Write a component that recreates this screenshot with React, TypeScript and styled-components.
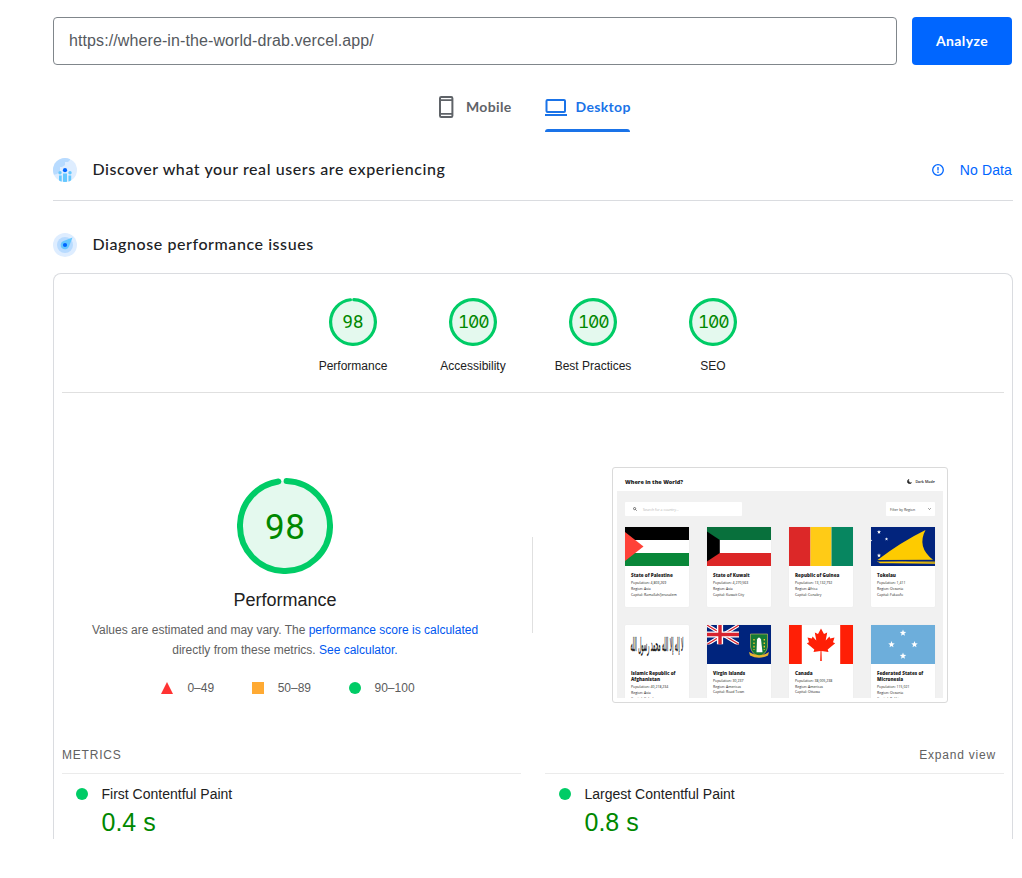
import React from "react";
import styled, { createGlobalStyle, css } from "styled-components";

const GlobalStyle = createGlobalStyle`
  *, *::before, *::after { box-sizing: border-box; }
  html, body { margin: 0; background: #fff; }
  body { font-family: "Liberation Sans", Arial, sans-serif; color: #212121; }
  svg { display: block; flex: none; }
`;

const heading = css`
  font-family: Lato, "Open Sans", sans-serif;
`;

const Page = styled.main`
  width: 1022px;
  height: 878px;
  padding: 17px 9px 0 53px;
  overflow: hidden;
`;

const SearchRow = styled.div`
  display: flex;
  gap: 15px;
  height: 48px;
  margin-right: 1px;
`;

const UrlField = styled.div`
  flex: 1;
  display: flex;
  align-items: center;
  padding: 0 15px 1px;
  border: 1px solid #80868b;
  border-radius: 4px;
  color: #55595e;
  font-size: 16px;
  letter-spacing: 0.1px;
`;

const AnalyzeButton = styled.button`
  ${heading}
  width: 100px;
  padding: 0 0 2px;
  border: 0;
  border-radius: 4px;
  background: #06f;
  color: #fff;
  font-size: 14px;
  font-weight: 700;
  letter-spacing: 0.4px;
`;

const Tabs = styled.nav`
  display: flex;
  height: 50px;
  margin-top: 17px;
  padding-left: 385px;
  gap: 34px;
`;

const Tab = styled.div<{ $active?: boolean; $width: number }>`
  ${heading}
  position: relative;
  display: flex;
  align-items: center;
  width: ${(p) => p.$width}px;
  gap: ${(p) => (p.$active ? 8.5 : 12)}px;
  color: ${(p) => (p.$active ? "#1a73e8" : "#5f6368")};
  font-size: 14px;
  font-weight: 700;
  letter-spacing: 0.35px;
  white-space: nowrap;
  &::after {
    content: "";
    position: absolute;
    left: 0;
    right: 0;
    bottom: 0;
    height: 3px;
    border-radius: 3px 3px 0 0;
    background: ${(p) => (p.$active ? "#1a73e8" : "transparent")};
  }
`;

const TabLabel = styled.span`
  padding-bottom: 2px;
`;

const Section = styled.header<{ $ruled?: boolean }>`
  display: flex;
  align-items: center;
  height: ${(p) => (p.$ruled ? 61 : 56)}px;
  margin-top: ${(p) => (p.$ruled ? 8 : 16)}px;
  border-bottom: ${(p) => (p.$ruled ? "1px solid #dadce0" : "0")};
`;

const SectionTitle = styled.h2`
  ${heading}
  flex: 1;
  margin: 0 0 0 15.5px;
  padding-bottom: 3px;
  color: #202124;
  font-size: 16px;
  font-weight: 500;
  letter-spacing: 0.57px;
`;

const NoData = styled.span`
  display: flex;
  align-items: center;
  gap: 16px;
  margin-right: 1px;
  color: #06f;
  font-size: 14px;
  letter-spacing: 0.12px;
`;

const Report = styled.section`
  height: 566px;
  padding: 0 8px;
  border: 1px solid #dadce0;
  border-bottom: 0;
  border-radius: 8px 8px 0 0;
`;

const GaugeRow = styled.div`
  display: flex;
  justify-content: center;
  height: 119px;
  padding-top: 24px;
  border-bottom: 1px solid #e0e0e0;
`;

const GaugeItem = styled.div`
  display: flex;
  flex-direction: column;
  align-items: center;
  gap: 13px;
  width: 120px;
  font-size: 12px;
  line-height: 14px;
`;

const Overview = styled.div`
  position: relative;
  display: grid;
  grid-template-columns: 446px 446px;
  gap: 49px;
  height: 344px;
  padding-top: 74px;
  &::after {
    content: "";
    position: absolute;
    left: 470px;
    top: 144px;
    width: 1px;
    height: 96px;
    background: #e0e0e0;
  }
`;

const ScoreColumn = styled.div`
  display: flex;
  flex-direction: column;
  align-items: center;
  padding-top: 11px;
`;

const ScoreTitle = styled.h3`
  margin: 13px 0 7px;
  font-size: 18px;
  font-weight: 400;
  line-height: 26px;
`;

const Description = styled.p`
  margin: 0;
  color: #616161;
  font-size: 12px;
  line-height: 20px;
  text-align: center;
`;

const Link = styled.span`
  color: #0057f0;
`;

const Legend = styled.div`
  display: flex;
  gap: 37.5px;
  height: 20px;
  margin-top: 18px;
  padding-left: 6px;
`;

const LegendItem = styled.span`
  display: flex;
  align-items: center;
  gap: 14px;
  color: #5c5c5c;
  font-size: 12px;
`;

const MetricsHeader = styled.div`
  display: flex;
  justify-content: space-between;
  align-items: center;
  height: 36px;
  padding-right: 8px;
  color: #616161;
  font-size: 12px;
  letter-spacing: 0.8px;
`;

const Metrics = styled.div`
  display: grid;
  grid-template-columns: 1fr 1fr;
  gap: 24px;
`;

const Metric = styled.div`
  display: grid;
  grid-template-columns: 12px 1fr;
  column-gap: 13.5px;
  align-items: center;
  padding: 10px 14px 0;
  border-top: 1px solid #ebebeb;
`;

const MetricName = styled.span`
  font-size: 14px;
  line-height: 20px;
`;

const MetricValue = styled.span`
  grid-column: 2;
  color: #080;
  font-size: 25px;
  line-height: 36px;
`;

/* Page preview */

const Preview = styled.div`
  justify-self: center;
  width: 336px;
  height: 236px;
  padding: 4px;
  border: 1px solid #dadada;
  border-radius: 3px;
  font-family: "Open Sans", sans-serif;
  color: #222;
`;

const PreviewBar = styled.div`
  display: flex;
  justify-content: space-between;
  align-items: center;
  height: 19px;
  padding: 0 8px;
  font-size: 5.5px;
  font-weight: 800;
`;

const DarkMode = styled.span`
  display: flex;
  align-items: center;
  gap: 3px;
  font-size: 3.7px;
  font-weight: 600;
`;

const PreviewBody = styled.div`
  height: 207px;
  padding: 11px 8px 0;
  overflow: hidden;
  background: #f1f1f1;
`;

const Filters = styled.div`
  display: flex;
  justify-content: space-between;
  height: 14px;
  margin-bottom: 11px;
`;

const Filter = styled.div<{ $width: number; $muted?: boolean }>`
  display: flex;
  align-items: center;
  justify-content: ${(p) => (p.$muted ? "flex-start" : "space-between")};
  gap: 6px;
  width: ${(p) => p.$width}px;
  padding: 0 ${(p) => (p.$muted ? 8 : 4)}px;
  border-radius: 1px;
  background: #fff;
  color: ${(p) => (p.$muted ? "#b5b5b5" : "#333")};
  font-size: 3.5px;
`;

const Countries = styled.div`
  display: grid;
  grid-template-columns: repeat(4, 64px);
  justify-content: space-between;
  row-gap: 18px;
`;

const Card = styled.article`
  height: 79.5px;
  border-radius: 1px;
  background: #fff;
  box-shadow: 0 0 1px #ddd;
`;

const CardText = styled.div`
  padding: 6px 6px 0;
  font-size: 3.5px;
  line-height: 5.7px;
  white-space: nowrap;
`;

const CountryName = styled.div`
  margin-bottom: 2px;
  font-size: 4.6px;
  font-weight: 800;
  line-height: 6.3px;
  white-space: pre-line;
`;

function Ring({ size, score }: { size: number; score: number }) {
  const big = size > 50;
  const stroke = big ? 6 : 3.2;
  const r = size / 2 - stroke / 2;
  const c = size / 2;
  const length = 2 * Math.PI * r;
  const full = score === 100;
  return (
    <svg width={size} height={size} viewBox={`0 0 ${size} ${size}`}>
      <circle cx={c} cy={c} r={r} fill="#e4f9ee" />
      <circle
        cx={c}
        cy={c}
        r={r}
        fill="none"
        stroke="#0c6"
        strokeWidth={stroke}
        strokeLinecap="round"
        strokeDasharray={full ? undefined : `${length * (score / 100) - stroke / 2} ${length}`}
        transform={`rotate(-88 ${c} ${c})`}
      />
      <text
        x={c + (full ? 0.8 : 0)}
        y={big ? 61 : 30.4}
        textAnchor="middle"
        fill="#080"
        fontFamily={full ? "Inter" : "Roboto"}
        fontSize={big ? 35 : full ? 17.5 : 18.5}
        textLength={big ? 40 : full ? 31.5 : 21}
        style={{ fontFeatureSettings: '"zero", "tnum"' }}
      >
        {score}
      </text>
    </svg>
  );
}

const Dot = () => (
  <svg width="12" height="12"><circle cx="6" cy="6" r="6" fill="#0c6" /></svg>
);

const MobileIcon = () => (
  <svg width="16" height="22" viewBox="0 0 16 22" fill="none" stroke="#5f6368">
    <rect x="2" y="1" width="12.400" height="20" rx="1.200" strokeWidth="2" />
    <path d="M2 4.200h12.400M2 17.800h12.400" strokeWidth="1.800" />
  </svg>
);

const DesktopIcon = () => (
  <svg width="22" height="18" viewBox="0 0 22 18" fill="none" stroke="#1a73e8" strokeWidth="2">
    <rect x="1.500" y="2" width="18.500" height="12" rx="1" />
    <path d="M0 17h22" />
  </svg>
);

const UsersIcon = () => (
  <svg width="24" height="24" viewBox="0 0 24 24">
    <clipPath id="globe"><circle cx="12" cy="12" r="12" /></clipPath>
    <g clipPath="url(#globe)">
      <path d="M0 0h24v24H0z" fill="#deedff" />
      <path d="M0 0h17v2l-2 2h-3v3l-3 2H7v4l-3 3-4 1z" fill="#b8dbff" />
      <path d="M10 24v-8.500h4V24zM6 24v-6.500h2.700V24zM15.500 24v-6.500h2.700V24z" fill="#65c8ff" />
      <circle cx="7" cy="14.800" r="1.700" fill="#65c8ff" />
      <circle cx="17" cy="14.800" r="1.700" fill="#65c8ff" />
    </g>
    <circle cx="12" cy="12.200" r="2.100" fill="#06f" />
  </svg>
);

const CompassIcon = () => (
  <svg width="24" height="24" viewBox="0 0 24 24">
    <circle cx="12" cy="12" r="12" fill="#deedff" />
    <circle cx="12" cy="12" r="8" fill="#b8dbff" />
    <path d="M19.500 4.500 16 13.500A4.300 4.300 0 1 1 10 8.200Z" fill="#65c8ff" />
    <circle cx="12" cy="12" r="2.100" fill="#06f" />
  </svg>
);

const AlertIcon = () => (
  <svg width="12" height="12" viewBox="0 0 12 12" fill="none" stroke="#06f">
    <circle cx="6" cy="6" r="5.300" strokeWidth="1.300" />
    <path d="M6 3v3.500M6 7.600v1.300" strokeWidth="1.300" />
  </svg>
);

const star = (x: number, y: number, r: number) => {
  const pts = Array.from({ length: 10 }, (_, i) => {
    const a = (Math.PI / 5) * i - Math.PI / 2;
    const q = i % 2 ? r * 0.42 : r;
    return `${x + q * Math.cos(a)},${y + q * Math.sin(a)}`;
  });
  return <polygon key={`${x}-${y}`} points={pts.join(" ")} fill="#fff" />;
};

const flags: Record<string, React.ReactNode> = {
  palestine: (
    <>
      <path d="M0 0h64v13H0z" />
      <path d="M0 26h64v13H0z" fill="#098739" />
      <path d="M0 5v29l18.500-14.500z" fill="#ff4238" />
    </>
  ),
  kuwait: (
    <>
      <path d="M0 0h64v13H0z" fill="#08703c" />
      <path d="M0 26h64v13H0z" fill="#dc2727" />
      <path d="M0 4.500 12.800 13v13L0 34.500z" />
    </>
  ),
  guinea: (
    <>
      <path d="M0 0h21.500v39H0z" fill="#dc2828" />
      <path d="M21.500 0h21v39h-21z" fill="#ffcb16" />
      <path d="M42.500 0H64v39H42.500z" fill="#078660" />
    </>
  ),
  tokelau: (
    <>
      <path d="M0 0h64v39H0z" fill="#02247d" />
      <path d="M6.500 33Q30 15 54.500 3q-9 17 7.500 29.800z" fill="#fecb00" />
      <path d="M6 34.300q27-.5 58 .2v2.200q-30-.6-55-.4z" fill="#fecb00" />
      <path d="M7 34.500q27-.5 57 .5" fill="none" stroke="#02247d" strokeWidth=".5" />
      {star(8, 5, 2.1)}
      {star(15.5, 12, 1.8)}
      {star(8, 28.5, 2.2)}
      {star(0.3, 13.5, 1)}
    </>
  ),
  afghanistan: (
    <g transform="translate(5.500 25.500) scale(1 2.200)">
      <text
        direction="rtl"
        textAnchor="end"
        fontFamily="DejaVu Sans"
        fontSize="8.500"
        fill="#111"
        stroke="#111"
        strokeWidth=".15"
        textLength="53"
        lengthAdjust="spacingAndGlyphs"
      >
        لا إله إلا الله محمد رسول الله
      </text>
    </g>
  ),
  virgin: (
    <>
      <path d="M0 0h64v39H0z" fill="#00247d" />
      <clipPath id="canton"><path d="M0 0h32v19.500H0z" /></clipPath>
      <g clipPath="url(#canton)">
        <path d="m0 0 32 19.500M32 0 0 19.500" stroke="#fff" strokeWidth="3.500" />
        <path d="m0 0 32 19.500M32 0 0 19.500" stroke="#d8232f" strokeWidth="1.200" />
        <path d="M13 0v19.500M0 9.500h32" stroke="#fff" strokeWidth="6.200" />
        <path d="M13 0v19.500M0 9.500h32" stroke="#d8232f" strokeWidth="3.400" />
      </g>
      <path d="M43.500 9h17v13q-1 7-8.500 9.500Q44.500 29 43.500 22z" fill="#147a35" stroke="#d8c45a" strokeWidth=".6" />
      <path d="M50 14.500q2-4 4 0l1.500 12.800h-6z" fill="#fff" />
      <path d="M47 14v11M57.300 14v11" stroke="#ffc72c" strokeWidth="1.300" strokeDasharray="1.600 1.800" />
      <path d="M42 27q10 6.500 20 0l-1 3.500q-9 4.500-18 0z" fill="#e8b530" />
    </>
  ),
  canada: (
    <>
      <path d="M0 0h64v39H0z" fill="#fff" />
      <path d="M0 0h12.800v39H0zM51.200 0H64v39H51.200z" fill="#ff1f06" />
      <path
        d="m32 3.500 3 5.500 3.200-1.600-1.500 8 3.700-4 .8 2 4.300-.9-1.500 4.700 2.200 1.100-7.500 6.100.8 2.600-7-1 .3 10h-1.600l.3-10-7 1 .8-2.600-7.500-6.100 2.200-1.100-1.500-4.700 4.300.9.800-2 3.700 4-1.500-8L29 9z"
        fill="#ff1f06"
      />
    </>
  ),
  micronesia: (
    <>
      <path d="M0 0h64v39H0z" fill="#6daedb" />
      {star(32, 8, 3.4)}
      {star(20.5, 19.5, 3.4)}
      {star(43.5, 19.5, 3.4)}
      {star(32, 31, 3.4)}
    </>
  ),
};

const countries = [
  ["palestine", "State of Palestine", "4,803,269", "Asia", "Ramallah/Jerusalem"],
  ["kuwait", "State of Kuwait", "4,270,563", "Asia", "Kuwait City"],
  ["guinea", "Republic of Guinea", "13,132,792", "Africa", "Conakry"],
  ["tokelau", "Tokelau", "1,411", "Oceania", "Fakaofo"],
  ["afghanistan", "Islamic Republic of\nAfghanistan", "40,218,234", "Asia", "Kabul"],
  ["virgin", "Virgin Islands", "30,237", "Americas", "Road Town"],
  ["canada", "Canada", "38,005,238", "Americas", "Ottawa"],
  ["micronesia", "Federated States of\nMicronesia", "115,021", "Oceania", "Palikir"],
];

function SitePreview() {
  return (
    <Preview>
      <PreviewBar>
        Where in the World?
        <DarkMode>
          <svg width="5" height="5" viewBox="0 0 5 5">
            <path d="M2 .3a2.300 2.300 0 1 0 2.700 3.200A2.200 2.200 0 0 1 2 .3z" fill="#222" stroke="#222" strokeWidth=".4" />
          </svg>
          Dark Mode
        </DarkMode>
      </PreviewBar>
      <PreviewBody>
        <Filters>
          <Filter $width={117} $muted>
            <svg width="4" height="4" viewBox="0 0 4 4" fill="none" stroke="#444" strokeWidth=".7">
              <circle cx="1.600" cy="1.600" r="1.100" />
              <path d="m2.400 2.400 1.300 1.300" />
            </svg>
            Search for a country...
          </Filter>
          <Filter $width={49}>
            Filter by Region
            <svg width="3" height="2" viewBox="0 0 3 2" fill="none" stroke="#333" strokeWidth=".6">
              <path d="m.3.3 1.200 1.200L2.700.3" />
            </svg>
          </Filter>
        </Filters>
        <Countries>
          {countries.map(([id, name, population, region, capital]) => (
            <Card key={id}>
              <svg width="64" height="39" viewBox="0 0 64 39">{flags[id]}</svg>
              <CardText>
                <CountryName>{name}</CountryName>
                <div>Population: {population}</div>
                <div>Region: {region}</div>
                <div>Capital: {capital}</div>
              </CardText>
            </Card>
          ))}
        </Countries>
      </PreviewBody>
    </Preview>
  );
}

const gauges: [string, number][] = [
  ["Performance", 98],
  ["Accessibility", 100],
  ["Best Practices", 100],
  ["SEO", 100],
];

export default function App() {
  return (
    <Page>
      <GlobalStyle />
      <SearchRow>
        <UrlField>https://where-in-the-world-drab.vercel.app/</UrlField>
        <AnalyzeButton>Analyze</AnalyzeButton>
      </SearchRow>
      <Tabs>
        <Tab $width={73}><MobileIcon /><TabLabel>Mobile</TabLabel></Tab>
        <Tab $width={85} $active><DesktopIcon /><TabLabel>Desktop</TabLabel></Tab>
      </Tabs>
      <Section $ruled>
        <UsersIcon />
        <SectionTitle>Discover what your real users are experiencing</SectionTitle>
        <NoData><AlertIcon />No Data</NoData>
      </Section>
      <Section>
        <CompassIcon />
        <SectionTitle>Diagnose performance issues</SectionTitle>
      </Section>
      <Report>
        <GaugeRow>
          {gauges.map(([label, score]) => (
            <GaugeItem key={label}>
              <Ring size={48} score={score} />
              {label}
            </GaugeItem>
          ))}
        </GaugeRow>
        <Overview>
          <ScoreColumn>
            <Ring size={96} score={98} />
            <ScoreTitle>Performance</ScoreTitle>
            <Description>
              Values are estimated and may vary. The <Link>performance score is calculated</Link>
              <br />
              directly from these metrics. <Link>See calculator.</Link>
            </Description>
            <Legend>
              <LegendItem>
                <svg width="12" height="12"><path d="M6 0l6 12H0z" fill="#f33" /></svg>
                0–49
              </LegendItem>
              <LegendItem>
                <svg width="12" height="12"><path d="M0 0h12v12H0z" fill="#fa3" /></svg>
                50–89
              </LegendItem>
              <LegendItem><Dot />90–100</LegendItem>
            </Legend>
          </ScoreColumn>
          <SitePreview />
        </Overview>
        <MetricsHeader>
          <span>METRICS</span>
          <span>Expand view</span>
        </MetricsHeader>
        <Metrics>
          <Metric>
            <Dot />
            <MetricName>First Contentful Paint</MetricName>
            <MetricValue>0.4 s</MetricValue>
          </Metric>
          <Metric>
            <Dot />
            <MetricName>Largest Contentful Paint</MetricName>
            <MetricValue>0.8 s</MetricValue>
          </Metric>
        </Metrics>
      </Report>
    </Page>
  );
}
